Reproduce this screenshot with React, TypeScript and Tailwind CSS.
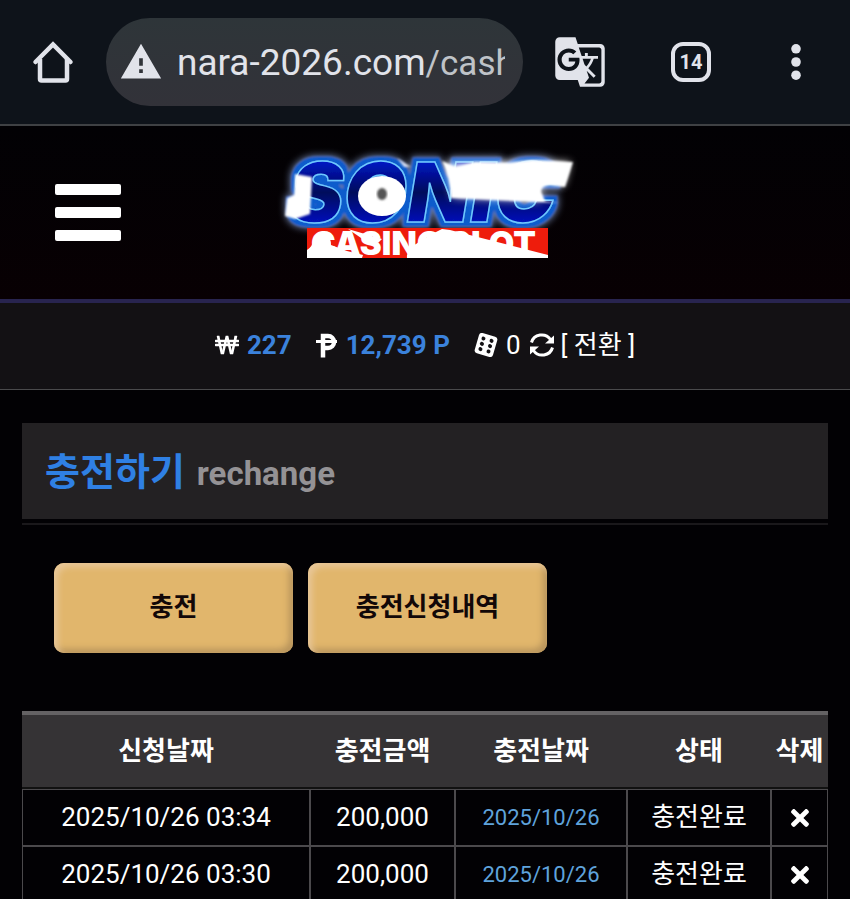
import { FaTimes, FaWonSign } from "react-icons/fa";
import { MdGTranslate, MdWarning } from "react-icons/md";

const rows = [
  { requested: "2025/10/26 03:34", amount: "200,000", charged: "2025/10/26", status: "충전완료" },
  { requested: "2025/10/26 03:30", amount: "200,000", charged: "2025/10/26", status: "충전완료" },
];

const BrowserBar = () => (
  <div className="flex h-[126px] items-center border-b-2 border-[#3f4144] bg-[#0e131a] pl-8 text-[#e1e3ea]">
    <button aria-label="Home" className="mr-8 shrink-0">
      <svg width="42" height="44" viewBox="0 0 42 44" fill="none" stroke="currentColor" strokeWidth="4.500">
        <path d="M3.500 22 21 4.500 38.500 22" strokeLinecap="round" />
        <path d="M8 19v20q0 1.500 1.500 1.500h24q1.500 0 1.500-1.500V19" />
      </svg>
    </button>
    <button className="flex h-[88px] min-w-0 flex-1 items-center overflow-hidden rounded-full bg-linear-to-b from-[#2e3539] to-[#323239] pr-[18px] pl-[13px]">
      <MdWarning size={44} className="mr-[14px] shrink-0" />
      <span className="overflow-hidden pt-0.5 text-[37px] whitespace-nowrap">
        nara-2026.com<span className="text-[35px] text-[#bfc3c8]">/cash</span>
      </span>
    </button>
    <button aria-label="Translate" className="ml-[30px] shrink-0">
      <MdGTranslate size={54} />
    </button>
    <button
      aria-label="Tabs"
      className="ml-16 flex size-10 shrink-0 items-center justify-center rounded-xl border-4 border-current text-[20px] font-bold"
    >
      14
    </button>
    <button aria-label="More" className="mr-8 ml-[63px] flex w-11 shrink-0 justify-center">
      <svg width="12" height="38" viewBox="0 0 12 38" fill="currentColor">
        <circle cx="6" cy="5.800" r="4.800" />
        <circle cx="6" cy="19" r="4.800" />
        <circle cx="6" cy="32.200" r="4.800" />
      </svg>
    </button>
  </div>
);

const Logo = () => (
  <svg width="310" height="135" viewBox="0 0 310 135" role="img" aria-label="Sonic Casino Slot" className="overflow-visible">
    <defs>
      <filter id="neon" x="-20%" y="-30%" width="140%" height="160%">
        <feMorphology in="SourceAlpha" operator="dilate" radius="4" result="wide" />
        <feFlood floodColor="#0c5ccc" />
        <feComposite in2="wide" operator="in" result="edge" />
        <feGaussianBlur in="edge" stdDeviation="1" result="edgeSoft" />
        <feMorphology in="SourceAlpha" operator="dilate" radius="5" result="halo" />
        <feFlood floodColor="#8fa8d8" floodOpacity="0.700" />
        <feComposite in2="halo" operator="in" />
        <feGaussianBlur stdDeviation="3.500" result="haloSoft" />
        <feMerge>
          <feMergeNode in="haloSoft" />
          <feMergeNode in="edgeSoft" />
          <feMergeNode in="SourceGraphic" />
        </feMerge>
      </filter>
      <filter id="soft" x="-10%" y="-20%" width="120%" height="140%">
        <feGaussianBlur stdDeviation="1" />
      </filter>
      <filter id="bloom" x="-20%" y="-50%" width="140%" height="200%">
        <feGaussianBlur stdDeviation="4" />
      </filter>
      <linearGradient id="blue" x1="0" y1="0" x2="0" y2="1">
        <stop offset="0.150" stopColor="#0018d0" />
        <stop offset="0.500" stopColor="#00085c" />
        <stop offset="0.850" stopColor="#0014c8" />
      </linearGradient>
    </defs>
    <g fontFamily="Inter, sans-serif" fontWeight="900">
      <text x="19" y="77" fontSize="82" fontStyle="italic" fill="url(#blue)" stroke="#6cc8ff" strokeWidth="1.500" filter="url(#neon)">
        SONIC
      </text>
      <rect x="37" y="83" width="241" height="30" fill="#ee1c0c" />
      <text x="41" y="110" fontSize="33" fill="#fff">
        CASINO SLOT
      </text>
    </g>
    <g fill="#fff">
      <path d="M25 29 42 32 40 69 25 74 15 71 17 53 24 50z" filter="url(#soft)" />
      <path d="M127 13 141 22 134 22z" filter="url(#soft)" opacity="0.800" />
      <ellipse cx="112" cy="51" rx="24" ry="20" />
      <ellipse cx="112" cy="49" rx="5" ry="6" fill="#555" filter="url(#soft)" />
      <path d="M176 18 300 17 294 40 272 38 270 56 183 52z" filter="url(#bloom)" opacity="0.900" />
      <path d="M172 16 186 22 205 17 240 18 262 15 303 17 295 42 280 40q-10 1-9 7l4 9 14 2-108-5q0-19-9-37z" filter="url(#soft)" />
      <path d="M37 113v-8q6-4 6-10 6-10 14-5 4 3 4 10l16 6 16 4-1 3zM137 113q-1-9 9-14l14-9 12-6 8 1 98 25v3z" />
      <path d="M78 84 112 94l-4 4-14-3z" />
    </g>
  </svg>
);

const PointIcon = () => (
  <svg width="22" height="25" viewBox="0 0 22 25" fill="none" stroke="currentColor">
    <path d="M7 24.500V3h5a5.500 5.500 0 0 1 0 12H7" strokeWidth="4.500" />
    <path d="M0 8.500h21" strokeWidth="3" />
  </svg>
);

const DiceIcon = () => (
  <svg width="24" height="24" viewBox="0 0 24 24">
    <g transform="rotate(16 12 12)">
      <rect x="2.500" y="1.500" width="19" height="21" rx="3" fill="#fff" />
      <g fill="#131114">
        <circle cx="7.800" cy="6.500" r="2" />
        <circle cx="7.800" cy="12" r="2" />
        <circle cx="7.800" cy="17.500" r="2" />
        <circle cx="16.200" cy="6.500" r="2" />
        <circle cx="16.200" cy="12" r="2" />
        <circle cx="16.200" cy="17.500" r="2" />
      </g>
    </g>
  </svg>
);

const RefreshIcon = () => (
  <svg width="26" height="26" viewBox="0 0 26 26" fill="none" stroke="currentColor" strokeWidth="3">
    <path d="M2.500 10.500a10.500 10 0 0 1 19-3M23.500 15.500a10.500 10 0 0 1-19 3" />
    <path d="M25 3.500v8h-9zM1 22.500v-8h9z" fill="currentColor" stroke="none" />
  </svg>
);

const Balance = () => (
  <div className="flex h-[87px] items-center justify-center border-b border-[#4a4a4c] bg-[#131114] pb-0.5 text-[26px] whitespace-nowrap">
    <FaWonSign size={24} />
    <span className="ml-2 font-bold text-[#3b82dc]">227</span>
    <span className="ml-6">
      <PointIcon />
    </span>
    <span className="ml-2 font-bold text-[#3b82dc]">12,739 P</span>
    <span className="ml-6">
      <DiceIcon />
    </span>
    <span className="ml-2">0</span>
    <button className="ml-2 flex items-center gap-1.5">
      <RefreshIcon />
      <span>[ 전환 ]</span>
    </button>
  </div>
);

const RechargeTable = () => {
  const loadRows = () =>
    rows.map((row) => (
      <tr key={row.requested} className="h-[57px] text-[26px]">
        <td className="border border-[#4b494c]">{row.requested}</td>
        <td className="border border-[#4b494c]">{row.amount}</td>
        <td className="border border-[#4b494c] text-[22px] text-[#5fa3dc]">{row.charged}</td>
        <td className="border border-[#4b494c]">{row.status}</td>
        <td className="border border-[#4b494c]">
          <button aria-label="삭제" className="flex w-full justify-center">
            <FaTimes size={26} />
          </button>
        </td>
      </tr>
    ));

  return (
    <table className="mt-[58px] w-full table-fixed border-separate border-spacing-0 text-center whitespace-nowrap">
      <colgroup>
        <col />
        <col className="w-[145px]" />
        <col className="w-[172px]" />
        <col className="w-[144px]" />
        <col className="w-[57px]" />
      </colgroup>
      <thead>
        <tr className="h-[78px] text-[26px]">
          {["신청날짜", "충전금액", "충전날짜", "상태", "삭제"].map((title) => (
            <th key={title} className="border-t-4 border-b-2 border-t-[#646264] border-b-[#111] bg-[#353335] font-bold">
              {title}
            </th>
          ))}
        </tr>
      </thead>
      <tbody>{loadRows()}</tbody>
    </table>
  );
};

const actionClass =
  "h-[90px] w-[239px] rounded-[10px] bg-[#e1b66c] pb-0.5 text-[26px] font-bold text-[#120808] shadow-[inset_4px_4px_6px_#e8c799,inset_-4px_-4px_6px_#b8945c]";

const App = () => {
  return (
    <div className="min-h-screen overflow-hidden bg-[#020104] font-['Roboto','Noto_Sans_CJK_KR',sans-serif] text-white">
      <BrowserBar />
      <header className="grid h-[177px] grid-cols-[1fr_auto_1fr] items-center border-b-4 border-[#28244f] bg-linear-to-b from-[#020104] to-[#080003]">
        <button aria-label="Menu" className="ml-[55px] flex w-[66px] flex-col gap-3">
          <span className="h-[11px] w-full rounded-xs bg-white"></span>
          <span className="h-[11px] w-full rounded-xs bg-white"></span>
          <span className="h-[11px] w-full rounded-xs bg-white"></span>
        </button>
        <Logo />
      </header>
      <Balance />
      <main className="px-[22px] pt-[33px]">
        <div className="border-b-2 border-[#1a181b] pb-1">
          <h1 className="flex h-[96px] items-baseline gap-3 bg-[#232123] px-[23px] pt-[21px] font-bold">
            <span className="text-[38px] text-[#2f80e4]">충전하기</span>
            <span className="text-[33px] text-[#949295]">rechange</span>
          </h1>
        </div>
        <div className="mt-[38px] flex gap-[15px] px-8">
          <button className={actionClass}>충전</button>
          <button className={actionClass}>충전신청내역</button>
        </div>
        <RechargeTable />
      </main>
    </div>
  );
};

export default App;
